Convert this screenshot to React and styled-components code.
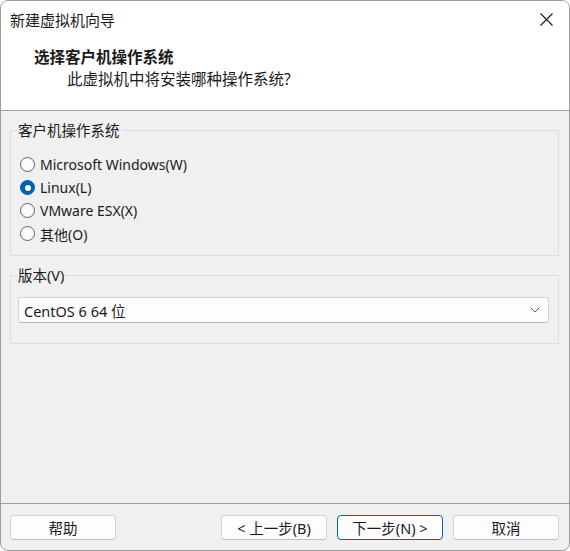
import React, { useState } from "react";
import styled, { createGlobalStyle } from "styled-components";

const FONT = `"Segoe UI", "Noto Sans", "Noto Sans CJK SC", sans-serif`;

const GlobalStyle = createGlobalStyle`
  html, body {
    margin: 0;
    padding: 0;
    background: #ffffff;
  }
  * {
    box-sizing: border-box;
  }
`;

const Window = styled.div`
  width: 570px;
  height: 551px;
  display: flex;
  flex-direction: column;
  border: 1px solid #9c9c9c;
  border-radius: 8px;
  overflow: hidden;
  background: #f0f0f0;
  font-family: ${FONT};
  color: #1a1a1a;
`;

const TitleBar = styled.div`
  height: 37px;
  display: flex;
  align-items: center;
  justify-content: space-between;
  padding: 0 15px 0 9px;
  background: #ffffff;
  font-size: 15px;
`;

const CloseButton = styled.button`
  width: 16px;
  height: 16px;
  padding: 0;
  border: none;
  background: none;
  display: flex;
  align-items: center;
  justify-content: center;
  color: #1a1a1a;
`;

const Header = styled.div`
  background: #ffffff;
  padding: 9px 0 21px 33px;
  border-bottom: 1px solid #a0a0a0;
`;

const HeaderTitle = styled.div`
  font-size: 15.5px;
  font-weight: bold;
  line-height: 20px;
`;

const HeaderSub = styled.div`
  font-size: 15.5px;
  line-height: 20px;
  margin: 2px 0 0 33px;
`;

const Body = styled.div`
  flex: 1;
  padding: 9px 10px 0 9px;
  display: flex;
  flex-direction: column;
  gap: 9px;
`;

const Group = styled.fieldset`
  margin: 0;
  padding: 0;
  border: 1px solid #dcdcdc;
  min-width: 0;
`;

const Legend = styled.legend`
  font-size: 14.5px;
  line-height: 20px;
  padding: 0 1px;
  margin-left: 6px;
`;

const GroupContent = styled.div`
  padding: ${(p) => p.$pad};
`;

const RadioList = styled.div`
  display: flex;
  flex-direction: column;
`;

const RadioRow = styled.label`
  height: 23px;
  display: flex;
  align-items: center;
  gap: 5px;
  font-size: 14px;
  cursor: default;
`;

const RadioDot = styled.span`
  width: 15px;
  height: 15px;
  border-radius: 50%;
  flex: none;
  display: flex;
  align-items: center;
  justify-content: center;
  border: 1px solid ${(p) => (p.$checked ? "#005fb8" : "#616161")};
  background: ${(p) => (p.$checked ? "#005fb8" : "#fbfbfb")};

  &::after {
    content: "";
    display: ${(p) => (p.$checked ? "block" : "none")};
    width: 6px;
    height: 6px;
    border-radius: 50%;
    background: #ffffff;
  }
`;

const Select = styled.div`
  height: 26px;
  display: flex;
  align-items: center;
  justify-content: space-between;
  padding: 0 8px 0 5px;
  background: #fdfdfd;
  border: 1px solid #d4d4d4;
  border-bottom-color: #b8b8b8;
  border-radius: 3px;
  font-size: 14.5px;
`;

const Footer = styled.div`
  display: flex;
  gap: 10px;
  padding: 11px 10px 10px 9px;
  border-top: 1px solid #a0a0a0;
`;

const Spacer = styled.div`
  flex: 1;
`;

const Button = styled.button`
  width: 106px;
  height: 25px;
  padding: 0;
  background: #fdfdfd;
  border: 1px solid ${(p) => (p.$primary ? "#005fb8" : "#d2d2d2")};
  border-bottom-color: ${(p) => (p.$primary ? "#005fb8" : "#bdbdbd")};
  border-radius: 4px;
  font-family: ${FONT};
  font-size: 14.5px;
  color: #1a1a1a;
`;

const OPTIONS = [
  "Microsoft Windows(W)",
  "Linux(L)",
  "VMware ESX(X)",
  "其他(O)",
];

export default function App() {
  const [os, setOs] = useState(1);

  return (
    <>
      <GlobalStyle />
      <Window>
        <TitleBar>
          <span>新建虚拟机向导</span>
          <CloseButton aria-label="关闭">
            <svg width="13" height="13" viewBox="0 0 13 13">
              <path d="M0.5 0.5 L12.5 12.5 M12.5 0.5 L0.5 12.5" stroke="#1a1a1a" strokeWidth="1.1" />
            </svg>
          </CloseButton>
        </TitleBar>

        <Header>
          <HeaderTitle>选择客户机操作系统</HeaderTitle>
          <HeaderSub>此虚拟机中将安装哪种操作系统?</HeaderSub>
        </Header>

        <Body>
          <Group>
            <Legend>客户机操作系统</Legend>
            <GroupContent $pad="13px 8px 10px 9px">
              <RadioList>
                {OPTIONS.map((label, i) => (
                  <RadioRow key={label} onClick={() => setOs(i)}>
                    <RadioDot $checked={os === i} />
                    {label}
                  </RadioRow>
                ))}
              </RadioList>
            </GroupContent>
          </Group>

          <Group>
            <Legend>版本(V)</Legend>
            <GroupContent $pad="12px 9px 20px 7px">
              <Select>
                <span>CentOS 6 64 位</span>
                <svg width="10" height="6" viewBox="0 0 10 6">
                  <path d="M0.5 0.5 L5 5 L9.5 0.5" fill="none" stroke="#606060" strokeWidth="1" />
                </svg>
              </Select>
            </GroupContent>
          </Group>
        </Body>

        <Footer>
          <Button>帮助</Button>
          <Spacer />
          <Button>&lt; 上一步(B)</Button>
          <Button $primary>下一步(N) &gt;</Button>
          <Button>取消</Button>
        </Footer>
      </Window>
    </>
  );
}
